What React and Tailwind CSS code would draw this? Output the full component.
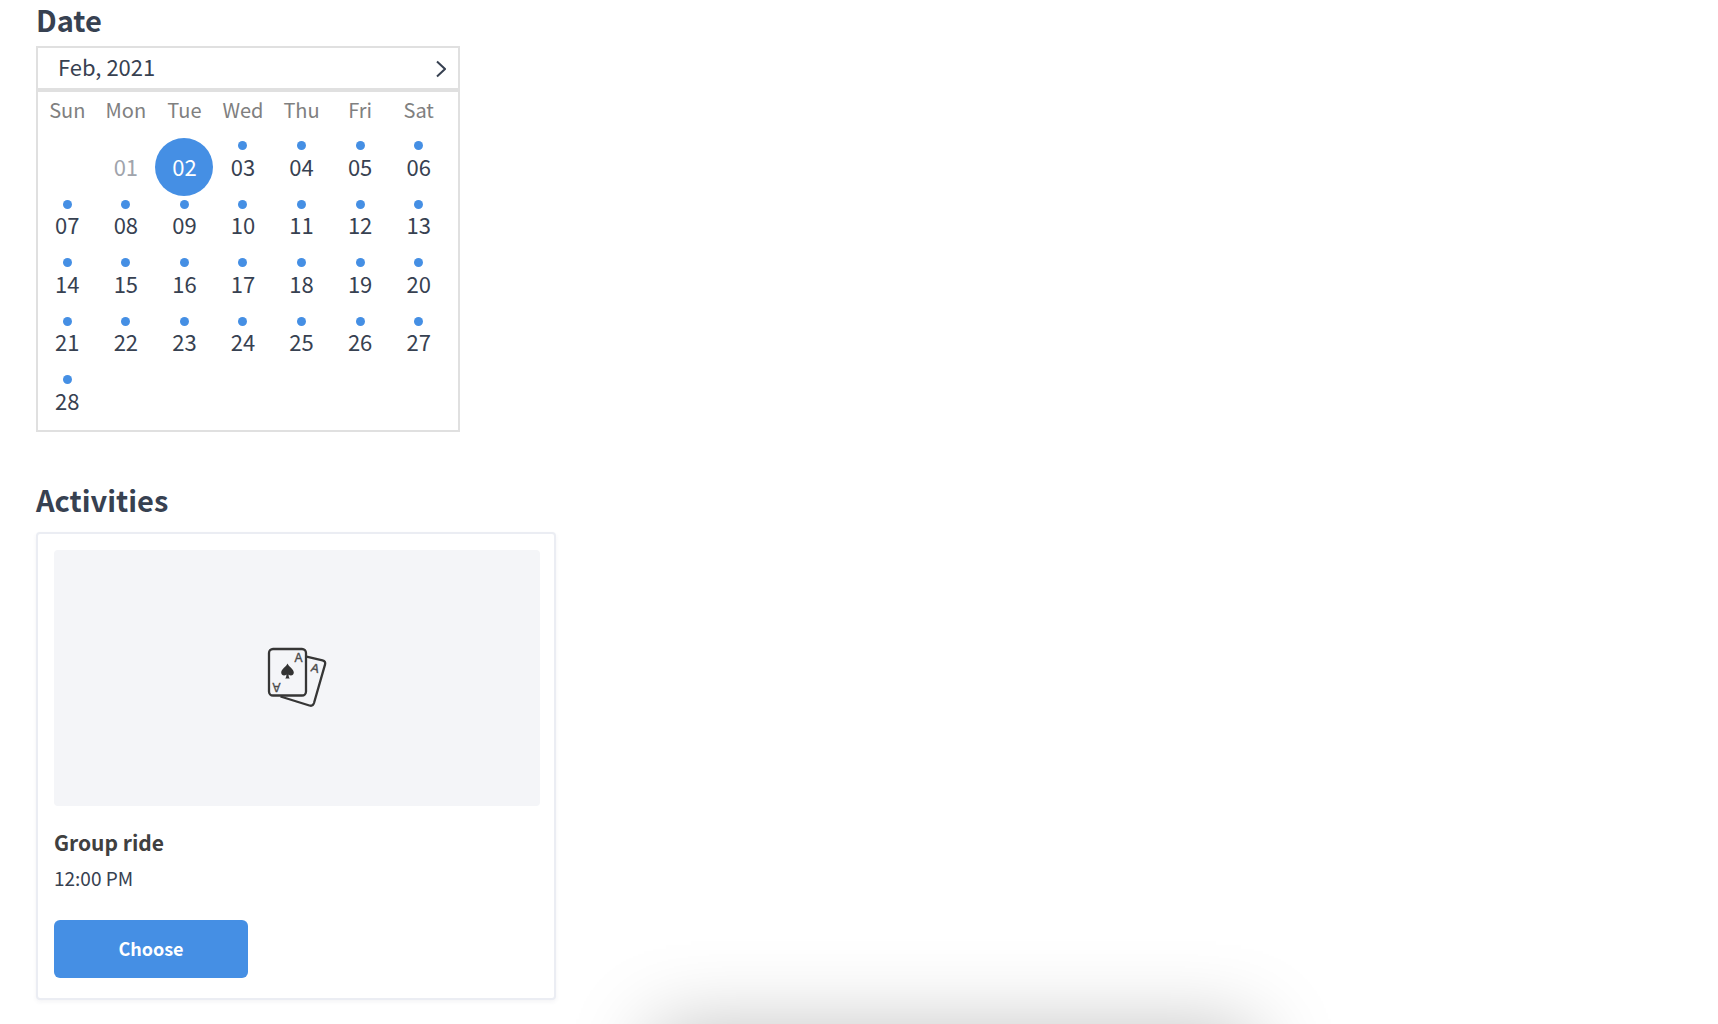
import { Fragment } from "react";

const WEEKDAYS = ["Sun", "Mon", "Tue", "Wed", "Thu", "Fri", "Sat"];
const SELECTED = 2;
const WEEKS = [
  [null, 1, 2, 3, 4, 5, 6],
  [7, 8, 9, 10, 11, 12, 13],
  [14, 15, 16, 17, 18, 19, 20],
  [21, 22, 23, 24, 25, 26, 27],
  [28, null, null, null, null, null, null],
];

function Day({ day }) {
  const label = String(day).padStart(2, "0");
  const base = "relative mx-auto flex size-[58px] items-center justify-center rounded-full pb-[2px] text-[22px]";
  if (day < SELECTED) {
    return <button type="button" disabled className={`${base} text-[#a0a4ac]`}>{label}</button>;
  }
  if (day === SELECTED) {
    return <button type="button" aria-pressed="true" className={`${base} bg-[#458fe4] text-white`}>{label}</button>;
  }
  return (
    <button type="button" className={base}>
      <span className="absolute top-[3px] size-[9px] rounded-full bg-[#458fe4]" />
      {label}
    </button>
  );
}

function Calendar() {
  return (
    <div className="mt-2 w-full max-w-[424px] border-2 border-[#e0e0e0]">
      <div className="flex h-11 items-center justify-between border-b-4 border-[#e0e0e0] pr-3 pl-5">
        <span className="pb-1 text-[22px] leading-9">Feb, 2021</span>
        <button type="button" aria-label="Next month" className="pt-[2px]">
          <svg width="10" height="18" viewBox="0 0 10 18" fill="none" stroke="#374151" strokeWidth="2">
            <path d="M1 1.5 9 9 1 16.5" />
          </svg>
        </button>
      </div>
      <div className="pr-[10px]">
        <table className="w-full table-fixed border-collapse text-center">
          <thead>
            <tr>
              {WEEKDAYS.map((d) => (
                <th key={d} scope="col" className="p-0 pb-[10px] text-[20px] leading-9 font-normal text-[#808080]">{d}</th>
              ))}
            </tr>
          </thead>
          <tbody>
            {WEEKS.map((week, i) => (
              <tr key={i} className="even:h-[59px]">
                {week.map((day, j) => (
                  <td key={j} className="p-0">{day ? <Day day={day} /> : null}</td>
                ))}
              </tr>
            ))}
          </tbody>
        </table>
      </div>
    </div>
  );
}

function CardsIcon() {
  return (
    <svg width="60" height="64" viewBox="0 0 60 64" fill="none" stroke="#363636" strokeWidth="2.3" strokeLinejoin="round" aria-hidden="true">
      <path d="M39.5 10.7 55.5 14.4Q59 15.4 58 18.6L47 57Q45.8 60.6 42.4 59.5L13.5 50.5" />
      <rect x="2" y="3" width="37" height="46.5" rx="4" />
      <path
        fill="#333333"
        stroke="none"
        d="M20.5 17.5C21.5 20.5 26.8 23 26.8 26.6C26.8 29.8 23 30.1 21.6 28.4C21.6 30.2 21.9 31.2 22.8 32.6H18.2C19.1 31.2 19.4 30.2 19.4 28.4C18 30.1 14.2 29.8 14.2 26.6C14.2 23 19.5 20.5 20.5 17.5Z"
      />
      <g fill="#4a4a4a" stroke="#4a4a4a" strokeWidth="0.4" fontFamily="Liberation Sans, sans-serif" fontSize="12" textAnchor="middle">
        <text x="31.4" y="16">A</text>
        <text x="0" y="0" transform="translate(9.4 37.3) rotate(180)">A</text>
        <text x="0" y="0" transform="translate(47.2 26) rotate(15)">A</text>
      </g>
    </svg>
  );
}

export default function App() {
  return (
    <Fragment>
      <main className="min-h-screen bg-white px-9 pb-6 font-['Noto_Sans_CJK_SC',sans-serif] text-[#374151]">
        <section>
          <h2 className="text-[29px] leading-[38px] font-bold">Date</h2>
          <Calendar />
        </section>
        <section className="mt-12">
          <h2 className="text-[29px] leading-[38px] font-bold">Activities</h2>
          <article className="mt-[14px] w-full max-w-[520px] rounded-sm border-2 border-[#ebedf3] bg-white pt-4 pr-[14px] pb-5 pl-4 shadow-[0_2px_4px_rgba(60,70,110,0.06)]">
            <div className="flex h-64 items-center justify-center rounded-sm bg-[#f4f5f8]">
              <CardsIcon />
            </div>
            <h3 className="mt-5 text-[21px] leading-8 font-bold text-[#404040]">Group ride</h3>
            <p className="mt-[6px] text-[19px] leading-7">12:00 PM</p>
            <button type="button" className="mt-7 flex h-[58px] w-[194px] items-center justify-center rounded-md bg-[#458fe4] pb-[2px] text-[18px] font-bold text-white">
              Choose
            </button>
          </article>
        </section>
      </main>
      <div className="pointer-events-none fixed inset-x-0 bottom-0 h-32 overflow-hidden" aria-hidden="true">
        <div className="absolute top-full left-[38%] h-72 w-[35%] shadow-[0_4px_76px_rgba(0,0,0,0.25)]" />
      </div>
    </Fragment>
  );
}
